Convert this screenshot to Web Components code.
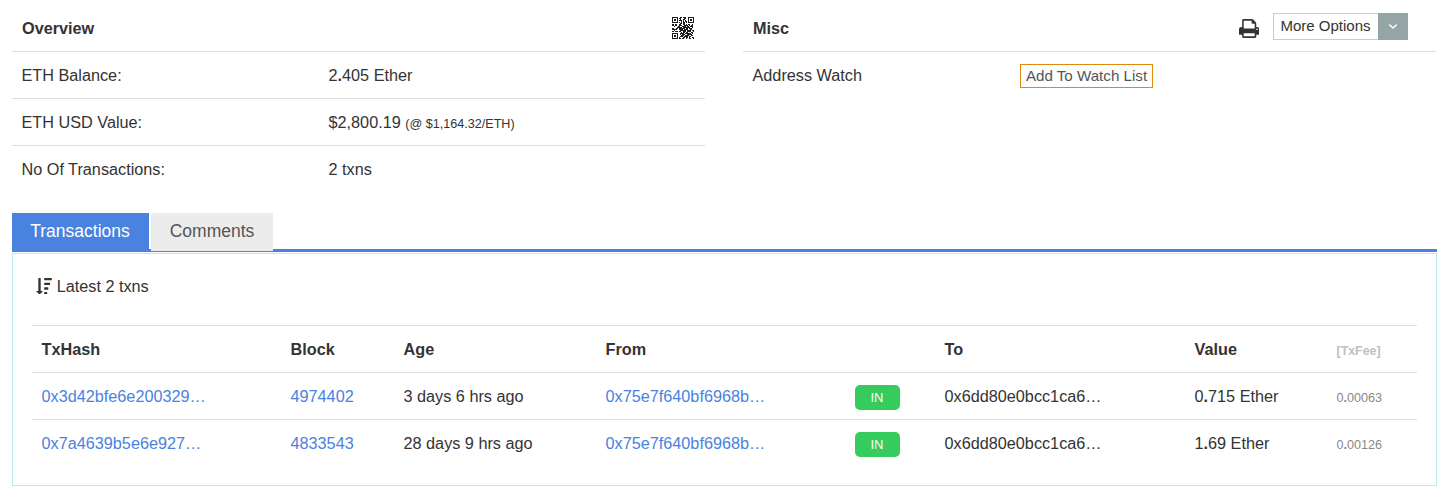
<!DOCTYPE html>
<html lang="en"><head><meta charset="utf-8"><title>Address</title>
<style>
body{margin:0;background:#fff;color:#333;font:16.24px/24px "Liberation Sans",Arial,sans-serif}
</style></head><body>
<address-page></address-page>
<script>
const define=(name,html,setup)=>customElements.define(name,class extends HTMLElement{
  constructor(){
    super();
    const t=document.createElement('template');
    t.innerHTML=html;
    this.attachShadow({mode:'open'}).append(t.content.cloneNode(true));
  }
  connectedCallback(){ if(setup) setup(this.shadowRoot,this); }
});

define('print-icon',`<style>:host{display:block;width:20.4px;height:19px}svg{display:block;width:100%;height:100%}</style>
<svg viewBox="0 128 1664 1536" fill="#333"><path d="M384 1536h896v-256h-896v256zM384 896h896v-384h-160q-40 0-68-28t-28-68v-160h-640v640zM1536 960q0-26-19-45t-45-19-45 19-19 45 19 45 45 19 45-19 19-45zM1664 960v416q0 13-9.5 22.5t-22.5 9.5h-224v160q0 40-28 68t-68 28h-960q-40 0-68-28t-28-68v-160h-224q-13 0-22.5-9.5t-9.5-22.5v-416q0-79 56.5-135.5t135.5-56.5h64v-544q0-40 28-68t68-28h672q40 0 88 20t76 48l152 152q28 28 48 76t20 88v256h64q79 0 135.5 56.5t56.5 135.5z"/></svg>`);

define('sort-icon',`<style>:host{display:block;width:16.4px;height:16.4px}svg{display:block;width:100%;height:100%}</style>
<svg viewBox="0 0 1792 1792" fill="#333"><path d="M736 1440q0 12-10 24l-319 319q-10 9-23 9-12 0-23-9l-320-320q-15-16-7-35 8-20 30-20h192v-1376q0-14 9-23t23-9h192q14 0 23 9t9 23v1376h192q14 0 23 9t9 23z"/><rect x="896" y="0" width="832" height="256" rx="30"/><rect x="896" y="512" width="640" height="256" rx="30"/><rect x="896" y="1024" width="448" height="256" rx="30"/><rect x="896" y="1536" width="320" height="256" rx="30"/></svg>`);

define('qr-icon',`<style>:host{display:block;width:22px;height:22px}svg{display:block;width:100%;height:100%}</style>
<svg viewBox="0 0 22 22"><path fill="#1c1c1c"/></svg>`,root=>{
  const rows=[
    '1111110011011100111111','1000010110001100100001','1011010010011000101101','1011010111010100101101',
    '1000010001010110100001','1111110101011010111111','0000000011011000000000','1101100110011010110010',
    '1101100111001111010110','0010001100111101101110','0000011111011111110010','1100110111111011011100',
    '1111100111101111001100','0010000011111101111011','1101110110011101111001','0000000001011011000110',
    '1111110011110111111010','1000010010111001111100','1011010001110111100110','1011010011101111011000',
    '1000010100011011010011','1111110110110010011001'];
  root.querySelector('path').setAttribute('d',rows.map((r,y)=>[...r].map((c,x)=>c==='1'?`M${x} ${y}h1v1h-1z`:'').join('')).join(''));
});

define('info-panel',`<style>:host{display:block}
header{display:flex;justify-content:space-between;padding:5px 10px 0;box-sizing:border-box;border-bottom:1px solid #ddd;height:52px}
b{padding-top:11px}</style><header><b><slot name="title"></slot></b><slot name="tools"></slot></header><slot></slot>`);

define('info-row',`<style>:host{display:grid;box-sizing:border-box;grid-template-columns:var(--label,307px) 1fr;height:47px;padding:11px 9.5px 0;border-bottom:1px solid #ddd}
:host([last]){border-color:transparent}</style><span><slot name="label"></slot></span><span><slot></slot></span>`);

define('watch-button',`<style>:host{display:block;width:133px;height:24px;margin-top:1px;box-sizing:border-box;border:1px solid #e08a0b;color:#555;font-size:15.15px;line-height:22px;text-align:center;white-space:nowrap}</style><slot></slot>`);

define('options-button',`<style>:host{display:flex;width:135px;height:27px;color:#333;font-size:15px;line-height:24px}
span{box-sizing:border-box;width:105px;border:1px solid #ccc;border-right:0;text-align:center;white-space:nowrap}
i{display:flex;width:30px;background:#95a5a6;align-items:center;justify-content:center}</style>
<span><slot></slot></span><i><svg width="10" height="7" viewBox="0 0 10 7" fill="none" stroke="#fff" stroke-width="1.4"><path d="M1.2 1.4 5 5.1 8.8 1.4"/></svg></i>`);

define('tab-item',`<style>:host{display:block;box-sizing:border-box;width:122px;height:38px;background:#ececec;color:#555;font-size:17.5px;line-height:37px;text-align:center}
:host([active]){width:137px;height:39px;background:#4a82df;color:#fff;padding-right:1px}</style><slot></slot>`);

define('tab-bar',`<style>:host{display:flex;gap:2px;height:39px;background:linear-gradient(#4a82df,#4a82df) 0 36px/100% 3px no-repeat}</style><slot></slot>`);

define('direction-badge',`<style>:host{display:block;width:44px;height:25px;padding-right:1px;border-radius:5px;background:#35cb5d;color:#fff;font-size:13px;line-height:25px;text-align:center}</style><slot></slot>`);

define('tx-row',`<style>:host{display:grid;box-sizing:border-box;grid-template-columns:249px 113px 202px 249.5px 89.5px 250px 142px 1fr;height:47px;align-items:start;padding:11px 0 0 9.5px;border-top:1px solid #ddd}
:host([head]){font-weight:bold}
.link{color:#4a82df}
.dir{padding-top:1px}
.fee{font-size:12.6px;color:#888;padding-top:2px}
:host([head]) .fee{font-size:12.4px;color:#c0c0c0}
:host([head]) .link{color:inherit}</style>
<span class="link"><slot name="hash"></slot></span><span class="link"><slot name="block"></slot></span><span><slot name="age"></slot></span><span class="link"><slot name="from"></slot></span><span class="dir"><slot name="dir"></slot></span><span><slot name="to"></slot></span><span><slot name="value"></slot></span><span class="fee"><slot name="fee"></slot></span>`);

define('address-page',`<style>
:host{display:block;padding:0 13px 0 12px}
.top{display:grid;grid-template-columns:693px 693px;gap:38px;height:213px}
qr-icon{margin:12px 1px 0 0}
.tools{display:flex;padding-right:18.5px}
print-icon{margin:14px 13.5px 0 0}
options-button{margin-top:8px}
small{font-size:12.6px;line-height:1}
.card{box-sizing:border-box;height:233px;margin-top:1px;border:1px solid #bce8f1;padding:20px 19px 0;box-shadow:0 1px 1px rgba(0,0,0,.05)}
.latest{display:flex;align-items:center;gap:4.3px;height:24px;padding-left:4px;margin-bottom:27px}
</style>
<div class="top">
<info-panel><span slot="title">Overview</span><qr-icon slot="tools"></qr-icon>
<info-row><span slot="label">ETH Balance:</span>2<b>.</b>405 Ether</info-row>
<info-row><span slot="label">ETH USD Value:</span>$2,800.19 <small>(@ $1,164.32/ETH)</small></info-row>
<info-row last><span slot="label">No Of Transactions:</span>2 txns</info-row></info-panel>
<info-panel><span slot="title">Misc</span><div class="tools" slot="tools"><print-icon></print-icon><options-button>More Options</options-button></div>
<info-row last style="--label:267.5px"><span slot="label">Address Watch</span><watch-button>Add To Watch List</watch-button></info-row></info-panel>
</div>
<tab-bar><tab-item active>Transactions</tab-item><tab-item>Comments</tab-item></tab-bar>
<div class="card">
<div class="latest"><sort-icon></sort-icon><span>Latest 2 txns</span></div>
<tx-row head><span slot="hash">TxHash</span><span slot="block">Block</span><span slot="age">Age</span><span slot="from">From</span><span slot="to">To</span><span slot="value">Value</span><span slot="fee">[TxFee]</span></tx-row>
<tx-row><span slot="hash">0x3d42bfe6e200329…</span><span slot="block">4974402</span><span slot="age">3 days 6 hrs ago</span><span slot="from">0x75e7f640bf6968b…</span><direction-badge slot="dir">IN</direction-badge><span slot="to">0x6dd80e0bcc1ca6…</span><span slot="value">0<b>.</b>715 Ether</span><span slot="fee">0<b>.</b>00063</span></tx-row>
<tx-row><span slot="hash">0x7a4639b5e6e927…</span><span slot="block">4833543</span><span slot="age">28 days 9 hrs ago</span><span slot="from">0x75e7f640bf6968b…</span><direction-badge slot="dir">IN</direction-badge><span slot="to">0x6dd80e0bcc1ca6…</span><span slot="value">1<b>.</b>69 Ether</span><span slot="fee">0<b>.</b>00126</span></tx-row>
</div>`);
</script>
</body></html>
